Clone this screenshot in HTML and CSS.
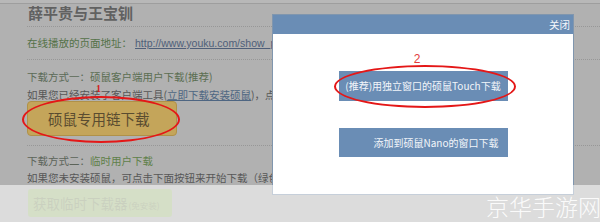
FILE: index.html
```html
<!DOCTYPE html>
<html lang="zh-CN">
<head>
<meta charset="utf-8">
<title>薛平贵与王宝钏</title>
<link rel="stylesheet" href="styles.css">
</head>
<body>
<div class="page">
  <div class="topstrip"></div>
  <div class="content">
    <h1 class="title">薛平贵与王宝钏</h1>
    <div class="sep sep-1"></div>
    <p class="line line-url"><span class="label">在线播放的页面地址：</span><a class="link">http://www.youku.com/show_p</a></p>
    <div class="sep sep-2"></div>
    <p class="line line-m1"><span class="mlabel">下载方式一：</span><span class="mname">硕鼠客户端用户下载(推荐)</span></p>
    <p class="line line-m1b">如果您已经安装了客户端工具(<a class="link">立即下载安装硕鼠</a>)，点</p>
    <div class="btn-wrap">
      <span class="marker marker-1">1</span>
      <div class="btn-gold">硕鼠专用链下载</div>
      <div class="ring ring-1"></div>
    </div>
    <div class="sep sep-3"></div>
    <p class="line line-m2"><span class="mlabel">下载方式二：</span><span class="mname">临时用户下载</span></p>
    <p class="line line-m2b">如果您未安装硕鼠，可点击下面按钮来开始下载（绿色</p>
    <div class="btn-green">获取临时下载器<span class="small">(免安装)</span></div>
  </div>

  <div class="modal">
    <div class="modal-head"><span class="close">关闭</span></div>
    <div class="modal-body">
      <div class="marker-2">2</div>
      <div class="mbtn-wrap">
        <div class="mbtn">(推荐)用独立窗口的硕鼠Touch下载</div>
        <div class="ring ring-2"></div>
      </div>
      <div class="mbtn mbtn-2">添加到硕鼠Nano的窗口下载</div>
    </div>
  </div>

  <div class="band"><span class="watermark">京华手游网</span></div>
</div>
</body>
</html>
```

FILE: styles.css
```css
* { box-sizing: border-box; }
html, body {
  margin: 0;
  padding: 0;
  width: 600px;
  height: 222px;
  overflow: hidden;
  background: #b1b1b1;
  font-family: "Liberation Sans", "Noto Sans CJK SC", sans-serif;
}
.page {
  position: relative;
  width: 600px;
  height: 222px;
  overflow: hidden;
}
.topstrip {
  height: 4px;
  background: #b8b8b8;
  border-bottom: 1px solid #9e9e9e;
}
.content {
  padding-left: 27px;
  white-space: nowrap;
}
.title {
  margin: 0;
  height: 19px;
  line-height: 18px;
  font-size: 15px;
  font-weight: bold;
  color: #616161;
  font-family: "Noto Sans CJK SC", sans-serif;
  padding-left: 1px;
}
.sep {
  height: 0;
  border-top: 1px dotted #979797;
}
.sep-1 { margin-top: 3px; }
.line {
  margin: 0;
  font-size: 10.5px;
  line-height: 16px;
  height: 16px;
  color: #575757;
  font-family: "Noto Sans CJK SC", sans-serif;
}
.link {
  color: #4f5f79;
  text-decoration: underline;
  font-family: "Liberation Sans", "Noto Sans CJK SC", sans-serif;
}
.line-url { margin-top: 8px; }
.line-url .label { color: #547248; }
.line-url .link { margin-left: 3px; }
.sep-2 { margin-top: 8px; }
.line-m1 { margin-top: 8px; height: 18px; line-height: 18px; }
.mlabel { color: #5b6a57; }
.mname { color: #5b6e52; }
.line-m1b { margin-top: 2px; height: 13px; line-height: 13px; }
.line-m1b .link { font-family: "Noto Sans CJK SC", sans-serif; color: #4e6682; }
.btn-wrap {
  position: relative;
  width: 150px;
  height: 35px;
}
.btn-gold {
  width: 150px;
  height: 35px;
  border-radius: 4px;
  background: #c4a55a;
  border: 1px solid #b09148;
  color: #5a4c30;
  font-family: "Noto Sans CJK SC", sans-serif;
  font-size: 14.5px;
  line-height: 33px;
  padding-left: 20px;
}
.ring {
  position: absolute;
  border: 2px solid #e41717;
  border-radius: 50%;
}
.ring-1 {
  left: -5px;
  top: -5px;
  width: 158px;
  height: 47px;
}
.marker {
  position: absolute;
  color: #d42020;
  font-size: 10px;
  line-height: 10px;
  font-family: "Liberation Serif", serif;
  font-weight: bold;
}
.marker-1 { left: 69px; top: -17px; }
.sep-3 { margin-top: 9px; }
.line-m2 { margin-top: 7px; }
.line-m2 .mlabel { color: #5c6459; }
.line-m2 .mname { color: #5f8049; }
.line-m2b { margin-top: 1px; }
.btn-green {
  margin-top: 3px;
  margin-left: 1px;
  width: 144px;
  height: 28px;
  border-radius: 3px;
  background: #a3b884;
  color: #8a9872;
  font-family: "Noto Sans CJK SC", sans-serif;
  font-size: 13.5px;
  line-height: 28px;
  padding-left: 5px;
}
.btn-green .small { font-size: 8.5px; margin-left: 1px; }

.modal {
  position: absolute;
  left: 272px;
  top: 14px;
  width: 302px;
  height: 181px;
  background: #ffffff;
  border: 1px solid #8096ae;
}
.modal-head {
  height: 19px;
  background: #6a8db5;
  text-align: right;
  padding-right: 3px;
}
.close {
  color: #f4f7fb;
  font-family: "Noto Sans CJK SC", sans-serif;
  font-size: 10.5px;
  line-height: 19px;
}
.modal-body {
  padding-top: 18px;
  display: flex;
  flex-direction: column;
  align-items: center;
}
.marker-2 {
  color: #e23c3c;
  font-family: "Liberation Sans", sans-serif;
  font-size: 12px;
  line-height: 14px;
  height: 14px;
  margin-right: 12px;
}
.mbtn-wrap {
  position: relative;
  margin-top: 5px;
}
.mbtn {
  width: 169px;
  height: 30px;
  background: #6a8db5;
  color: #f3f6fa;
  font-family: "Noto Sans CJK SC", sans-serif;
  font-size: 10px;
  line-height: 30px;
  text-align: center;
  white-space: nowrap;
}
.ring-2 {
  left: -5px;
  top: -6px;
  width: 182px;
  height: 43px;
}
.mbtn-2 {
  margin-top: 27px;
  height: 29px;
  line-height: 29px;
  padding-left: 26px;
}

.band {
  position: absolute;
  left: 0;
  top: 185px;
  width: 600px;
  height: 37px;
  background: rgba(255, 255, 255, 0.55);
  display: flex;
  justify-content: flex-end;
}
.watermark {
  color: rgba(255, 255, 255, 0.9);
  font-family: "Noto Sans CJK SC", sans-serif;
  font-weight: 200;
  font-size: 23px;
  line-height: 42px;
  white-space: nowrap;
  margin-right: -1px;
}
```
